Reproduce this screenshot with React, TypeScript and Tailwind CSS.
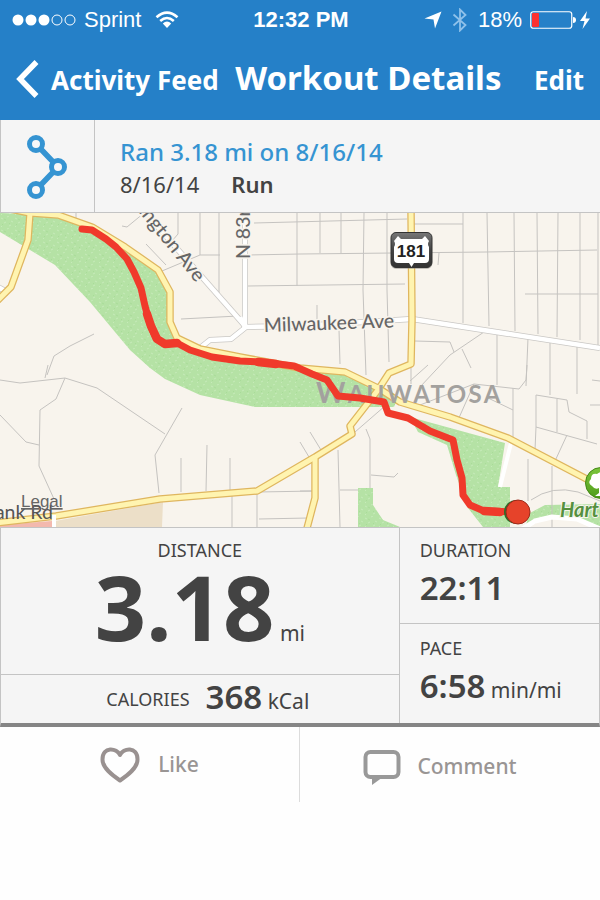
import React from 'react';

const MINOR_STREETS = [
  // west side
  'M47 375 L54 356 L70 346 L94 334',
  'M45 378 L48 365',
  'M0 380 L20 383 L65 378 L97 388 L165 434',
  'M65 378 L56 399 L40 410 L39 466 L54 499',
  'M0 415 L26 442 L39 445',
  'M182 408 L155 455 L159 493',
  'M181 458 V492 M207 445 L206 491 M230 458 V490',
  'M232 496 V527 M257 494 V527 M258 492 L315 491 M259 519 L308 518',
  // north grid
  'M76 213 V221 M122 226 L127 227 L144 213 M178 213 V234 L172 241 M146 244 L166 265',
  'M162 271 L200 255 V213 M219 213 V295 M200 255 H220 M248 255 L300 254 L486 252 L597 250',
  'M254 223 L407 219 M297 213 V286 M248 286 L405 284 M181 319 L238 316',
  'M320 213 V253 M341 213 V253 M364 213 L363 290 L366 375 M387 213 V290 L389 362',
  'M317 305 V320 M339 330 L340 364 M414 224 H463 M439 253 L438 265',
  'M463 213 V323 M487 213 L489 326 M514 213 L515 331 M537 213 L538 334 M558 213 L557 337 M580 213 V340 M598 213 V345',
  'M525 294 H598 M497 333 V385 M528 338 L526 386 M550 342 V395 M577 346 V394',
  // east side
  'M415 341 L450 342 L454 352 M484 332 L450 355 L420 387 M462 349 L471 368',
  'M527 365 L526 380 L519 389 L474 384 L458 420 M420 405 L474 384 M488 398 L513 410',
  'M513 388 V445 M536 395 L567 400 L569 412 L587 421 V439 M557 399 V432 M536 427 V395',
  'M536 427 L535 450 M536 427 L597 444 M567 435 L555 461 M528 459 V501 M552 466 V527',
  'M592 380 L600 381 M590 405 H600 M531 500 Q552 485 578 492 L600 501',
  'M393 399 L355 432 M366 429 L370 439 V488 M338 450 L340 527 M340 490 H358 M371 475 L394 477 L398 473',
  'M300 442 L309 457 M310 432 L321 450 M300 491 H312 M410 381 L428 365 M411 384 V368',
];

const YELLOW_ROADS = [
  'M0 207 L30 213 L58 215 L92 227 L125 247 L158 270 L170 292 L170 322 L177 338 L200 349 L240 357 L300 368 L345 372 L378 388 L400 402 L450 417 L508 438 L600 486',
  'M30 213 L28 240 L11 287 L-6 304',
  'M411 210 L412 320 L411 364 L389 373 L378 390 L350 426 L352 434 L315 457 L257 491 L160 499 L56 516 L-4 523',
  'M315 457 L315 498 L306 532',
];

const WHITE_ROADS = [
  'M150 218 L246 327',
  'M245 213 V327',
  'M240 317 L245 327',
  'M200 348 L210 340 L231 339 L246 327 L300 326 L412 319 L600 348',
  'M-2 287 L9 293',
];

const ROUTE =
  'M82 229 L92 230 L106 239 L116 247 L127 259 L134 272 L141 288 L145 306 L150 324 L156 338 L164 344 L177 343 L190 350 L212 357 L240 361 L262 362 L294 366 L312 374 L327 380 L338 396 L360 398 L384 402 L388 413 L408 418 L430 431 L453 440 L457 460 L462 478 L463 495 L470 505 L484 511 L517 512';

const ROUTE_BULGES = 'M147 314 L151 326 L157 339 L165 344 L177 343 M258 362 L276 364 M484 511 L500 512';

function SignalDots() {
  return (
    <svg className="h-3 w-16" viewBox="0 0 64 12" aria-hidden="true">
      {[6, 19, 32].map(cx => (
        <circle key={cx} cx={cx} cy="6" r="5.5" fill="#fff" />
      ))}
      {[45, 58].map(cx => (
        <circle key={cx} cx={cx} cy="6" r="5" fill="none" stroke="#fff" />
      ))}
    </svg>
  );
}

function WifiIcon() {
  return (
    <svg className="h-[18px] w-6" viewBox="0 0 24 18" aria-hidden="true">
      <g fill="none" stroke="#fff" strokeWidth="2.6">
        <path d="M1.5 6.2 Q12 -3 22.5 6.2" />
        <path d="M5.2 10 Q12 4 18.8 10" />
      </g>
      <path d="M7.8 12.4 Q12 8.8 16.2 12.4 L12 17 Z" fill="#fff" />
    </svg>
  );
}

function StatusBar() {
  return (
    <div className="grid h-10 grid-cols-[1fr_auto_1fr] items-center pr-2.5 pl-3 font-['Liberation_Sans',sans-serif] text-[22px] leading-6">
      <div className="flex items-center">
        <SignalDots />
        <span className="mr-3.5 ml-2">Sprint</span>
        <WifiIcon />
      </div>
      <span className="font-bold">12:32 PM</span>
      <div className="flex items-center justify-end">
        <svg className="mr-2.5 h-[18px] w-[18px]" viewBox="0 0 18 18" aria-hidden="true">
          <path d="M17.5 0.5 L11 17.5 L9.5 8.5 L0.5 7.5 Z" fill="#fff" />
        </svg>
        <svg className="mr-2.5 h-6 w-4" viewBox="0 0 16 24" aria-hidden="true">
          <path d="M1.5 6.5 L13.5 17 L8 22.5 V1.5 L13.5 7 L1.5 17.5" fill="none" stroke="#8fc1ea" strokeWidth="1.8" />
        </svg>
        <span className="mr-2">18%</span>
        <svg className="mr-1 h-[18px] w-[46px]" viewBox="0 0 46 18" aria-hidden="true">
          <rect x="0.75" y="0.75" width="41" height="16.5" rx="2.5" fill="none" stroke="#fff" strokeWidth="1.2" />
          <rect x="2" y="2" width="7" height="14" rx="1" fill="#fc3130" />
          <path d="M43 6 Q46 6 46 9 Q46 12 43 12 Z" fill="#fff" />
        </svg>
        <svg className="h-5 w-2.5" viewBox="0 0 10 20" aria-hidden="true">
          <path d="M7 1 L0 11 H4.5 L2.5 19 L10 8.5 H5.5 Z" fill="#fff" />
        </svg>
      </div>
    </div>
  );
}

function NavBar() {
  return (
    <nav className="flex h-20 items-baseline justify-between px-4 pt-[18px] font-bold">
      <button type="button" className="text-[26px] leading-10">
        <svg className="mr-3 mb-2 inline-block h-[38px] w-[23px] align-middle" viewBox="0 0 23 38" aria-hidden="true">
          <path d="M20.5 2 L4 19 L20.5 36" fill="none" stroke="#fff" strokeWidth="5.5" />
        </svg>
        Activity Feed
      </button>
      <h1 className="text-[33px] leading-10">Workout Details</h1>
      <button type="button" className="ml-4 text-[26px] leading-10">
        Edit
      </button>
    </nav>
  );
}

function WorkoutHeader() {
  return (
    <section className="flex border-b border-l border-[#c4c4c4] bg-[#f5f5f5]">
      <div className="flex w-[94px] items-center justify-center border-r border-[#c4c4c4]">
        <svg className="h-[66px] w-[42px]" viewBox="0 0 42 66" aria-hidden="true">
          <path d="M9 11 L31 34 L9 57" fill="none" stroke="#3594d2" strokeWidth="5.5" />
          <g fill="#f8f8f8" stroke="#3594d2" strokeWidth="5">
            <circle cx="9" cy="11" r="6.5" />
            <circle cx="31" cy="34" r="6.5" />
            <circle cx="9" cy="57" r="6.5" />
          </g>
        </svg>
      </div>
      <div className="px-[25px] pt-4 pb-3">
        <h2 className="text-2xl font-medium text-[#3594d2]">Ran 3.18 mi on 8/16/14</h2>
        <p className="flex gap-8 text-[22px] leading-8">
          <span>8/16/14</span>
          <span className="font-semibold">Run</span>
        </p>
      </div>
    </section>
  );
}

function RouteMap() {
  return (
    <svg className="block w-full" viewBox="0 213 600 314" role="img" aria-label="Route map">
      <defs>
        <pattern id="grass" width="14" height="12" patternUnits="userSpaceOnUse">
          <rect width="14" height="12" fill="#b5e2a5" />
          <path d="M1 2 l2 1 M7 1 l2 -1 M11 5 l2 1 M4 7 l2 -1 M9 10 l2 -1 M1 11 l1 -1" stroke="#c6ebb9" strokeWidth="1" />
          <path d="M4 3 l2 1 M9 7 l1 1 M2 8 l1 1" stroke="#a9dc99" strokeWidth="1" />
        </pattern>
        <linearGradient id="shield" x1="0" y1="0" x2="0" y2="1">
          <stop offset="0" stopColor="#777" />
          <stop offset="0.5" stopColor="#444" />
          <stop offset="1" stopColor="#333" />
        </linearGradient>
        <linearGradient id="tree" x1="0" y1="0" x2="0" y2="1">
          <stop offset="0" stopColor="#7cc63c" />
          <stop offset="1" stopColor="#4f9c1b" />
        </linearGradient>
      </defs>

      <rect y="213" width="600" height="314" fill="#f8f4ed" />
      <path d="M55 521 L163 502 L162 527 H55 Z" fill="#ecdfc8" />
      <path d="M0 525 L52 521 V527 H0 Z" fill="#f3b9ae" />

      {/* parks */}
      <g fill="url(#grass)">
        <path d="M0 213 L58 215 L92 227 L125 247 L158 270 L170 292 L170 322 L177 338 L200 349 L240 357 L300 368 L345 374 L378 388 L396 402 L394 407 L255 407 L200 395 L165 379 L150 368 L130 350 L90 302 L55 265 L30 250 L0 232 Z" />
        <path d="M410 417 L505 443 L498 487 H510 V527 H483 L468 508 L456 475 L447 445 L418 432 Z" />
        <path d="M358 488 H373 V505 L383 520 L400 527 H358 Z" />
        <path d="M528 514 L545 505 L600 504 V527 L575 519 L550 517 L526 527 Z" />
      </g>

      <g fill="none" stroke="#c5c3c0" strokeWidth="1">
        {MINOR_STREETS.map(d => (
          <path key={d} d={d} />
        ))}
      </g>

      <g fill="none" strokeLinejoin="round">
        <path d="M505 540 L535 521 L552 517 L577 519 L600 529" stroke="#fff" strokeWidth="5" />
        <path d="M511 443 L500 487" stroke="#fff" strokeWidth="4" />
        <g stroke="#c9c7c4" strokeWidth="6">
          {WHITE_ROADS.map(d => (
            <path key={d} d={d} />
          ))}
        </g>
        <g stroke="#fff" strokeWidth="4.5">
          {WHITE_ROADS.map(d => (
            <path key={d} d={d} />
          ))}
        </g>
        <g stroke="#dfb65f" strokeWidth="7.5">
          {YELLOW_ROADS.map(d => (
            <path key={d} d={d} />
          ))}
        </g>
        <g stroke="#fff4b0" strokeWidth="5">
          {YELLOW_ROADS.map(d => (
            <path key={d} d={d} />
          ))}
        </g>
        <path d="M54 515 V527" stroke="#fff" strokeWidth="4" />
      </g>

      {/* street names */}
      <g fill="#666" stroke="#f8f4ed" strokeWidth="3" paintOrder="stroke" fontFamily="Lato, sans-serif" fontSize="19.5" fontWeight="500">
        <text transform="translate(264 332) rotate(-2)">Milwaukee Ave</text>
        <text transform="translate(250 259) rotate(-90)">N 83rd St</text>
        <text transform="translate(196 283) rotate(51)" textAnchor="end">Washington Ave</text>
      </g>
      <text x="53" y="519" textAnchor="end" fill="#555" fontFamily="Lato, sans-serif" fontSize="19.5">
        Burbank Rd
      </text>
      <text x="21" y="507" fill="#666" fontFamily="Liberation Sans, sans-serif" fontSize="17" textDecoration="underline">
        Legal
      </text>
      <text x="316" y="403" fill="#a3a19e" fontFamily="Lato, sans-serif" fontSize="24" fontWeight="700" className="tracking-widest">
        <tspan fontSize="28">W</tspan>AUWATOSA
      </text>
      <text x="560" y="517" fill="#55903f" stroke="#f8f4ed" strokeWidth="2" paintOrder="stroke" fontFamily="Lato, sans-serif" fontSize="20" fontWeight="700" fontStyle="italic">
        Hart
      </text>

      {/* state highway shield */}
      <rect x="391" y="234" width="41" height="35" rx="5" fill="#8a8884" opacity="0.5" />
      <rect x="391" y="232.5" width="41" height="35" rx="5" fill="url(#shield)" stroke="#333" />
      <path d="M398 236 L401 239 H422 L425 236 L429 241 Q427 244 429 247 V259 Q429 263 425 263 H414 L411.5 267 L409 263 H398 Q394 263 394 259 V247 Q396 244 394 241 Z" fill="#fff" />
      <text x="411" y="257" textAnchor="middle" fill="#222" fontFamily="Liberation Sans, sans-serif" fontSize="17" fontWeight="700">
        181
      </text>

      {/* park pin */}
      <circle cx="601" cy="483" r="15.5" fill="url(#tree)" stroke="#448816" />
      <path d="M592 486 Q587 483 591 479 Q591 473 597 474 Q601 470 606 474 V496 H595 L599 493 V488 Q595 490 592 486 Z" fill="#fff" />

      {/* run */}
      <g fill="none" stroke="#f03a2b" strokeLinejoin="round" strokeLinecap="round">
        <path d={ROUTE} strokeWidth="7" />
        <path d={ROUTE_BULGES} strokeWidth="8.5" />
      </g>
      <circle cx="516" cy="512" r="12" fill="#2f6d2a" />
      <circle cx="518" cy="512" r="12" fill="#e6432a" stroke="#9c2a1b" />
    </svg>
  );
}

function Stats() {
  return (
    <section className="grid grid-cols-[2fr_1fr] border-x border-b-4 border-[#c4c4c4] border-b-[#858585] bg-[#f5f5f5]">
      <div className="flex flex-col border-t border-r border-[#c4c4c4]">
        <div className="h-[147px] border-b border-[#c4c4c4] pt-2 text-center">
          <h3 className="text-lg leading-7">DISTANCE</h3>
          <p className="text-[21px] leading-[84px]">
            <span className="text-[90px] font-bold">3.18</span> mi
          </p>
        </div>
        <div className="flex h-12 items-center justify-center pl-4">
          <h3 className="mr-4 text-lg leading-[44px]">CALORIES</h3>
          <p className="text-[21px] leading-[44px]">
            <span className="text-[33px] font-semibold">368</span> kCal
          </p>
        </div>
      </div>
      <div className="border-t border-[#c4c4c4]">
        <div className="h-24 border-b border-[#c4c4c4] px-5 pt-2">
          <h3 className="text-lg leading-7">DURATION</h3>
          <p className="text-[33px] leading-[48px] font-semibold">22:11</p>
        </div>
        <div className="px-5 pt-2">
          <h3 className="text-lg leading-8">PACE</h3>
          <p className="text-[21px] leading-[44px]">
            <span className="text-[33px] font-semibold">6:58</span> min/mi
          </p>
        </div>
      </div>
    </section>
  );
}

function Actions() {
  return (
    <div className="grid h-[75px] grid-cols-2 text-[21px] font-medium text-[#999594]">
      <button type="button" className="flex items-center justify-center border-r border-[#dcdcdc]">
        <svg className="mr-[18px] h-9 w-10" viewBox="0 0 40 36" aria-hidden="true">
          <path
            d="M20 8 C17 1 2.5 -1 2.5 12.5 C2.5 21 12 28 20 33.5 C28 28 37.5 21 37.5 12.5 C37.5 -1 23 1 20 8 Z"
            fill="none"
            stroke="#999190"
            strokeWidth="4"
            strokeLinejoin="round"
          />
        </svg>
        Like
      </button>
      <button type="button" className="flex items-center justify-center pt-1 pr-5">
        <svg className="mr-4 h-9 w-[38px]" viewBox="0 0 38 36" aria-hidden="true">
          <rect x="2.5" y="3" width="33" height="25" rx="5" fill="none" stroke="#999" strokeWidth="4" />
          <path d="M9 28 H20 L9 36 Z" fill="#999" />
        </svg>
        Comment
      </button>
    </div>
  );
}

export default function App() {
  return (
    <main className="min-h-screen bg-[#fefefe] font-['Noto_Sans',sans-serif] text-[#434343]">
      <header className="bg-[#2580c8] text-white">
        <StatusBar />
        <NavBar />
      </header>
      <WorkoutHeader />
      <RouteMap />
      <Stats />
      <Actions />
    </main>
  );
}
